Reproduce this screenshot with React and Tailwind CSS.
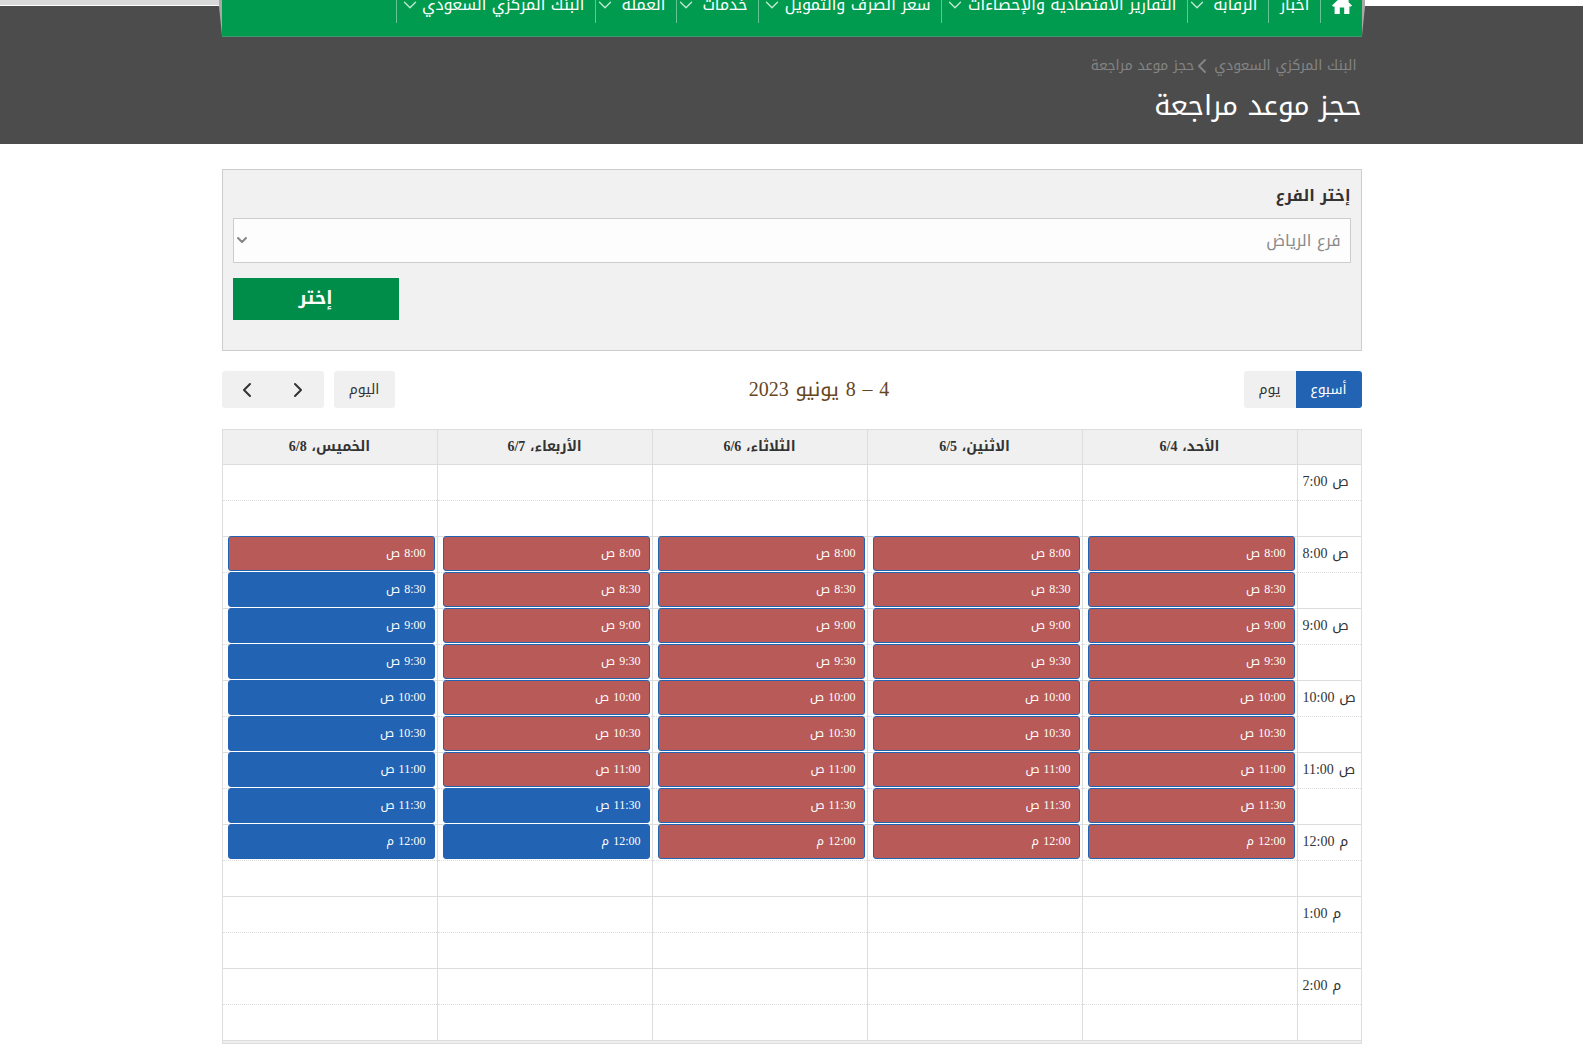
import { useState } from "react";
import { ChevronDown, ChevronLeft, ChevronRight } from "lucide-react";

const NAV = [
  { label: "أخبار", size: "w-[52px]" },
  { label: "الرقابة", size: "w-[81px]", menu: true },
  { label: "التقارير الاقتصادية والإحصاءات", size: "w-[246px] pl-1", menu: true },
  { label: "سعر الصرف والتمويل", size: "w-[183px] pl-1", menu: true },
  { label: "خدمات", size: "w-[82px]", menu: true },
  { label: "العملة", size: "w-[81px]", menu: true },
  { label: "البنك المركزي السعودي", size: "w-[199px] pl-1", menu: true },
];

// booked = number of slots already taken, counted from 8:00
const DAYS = [
  { name: "الأحد،", date: "6/4", booked: 9 },
  { name: "الاثنين،", date: "6/5", booked: 9 },
  { name: "الثلاثاء،", date: "6/6", booked: 9 },
  { name: "الأربعاء،", date: "6/7", booked: 7 },
  { name: "الخميس،", date: "6/8", booked: 1 },
];

const HOURS = [7, 8, 9, 10, 11, 12, 1, 2];
const ROWS = HOURS.flatMap((hour) => [
  { hour, minutes: "00" },
  { hour, minutes: "30" },
]);
const FIRST_SLOT = 2;
const LAST_SLOT = 10;

const period = (hour) => (hour >= 7 && hour < 12 ? "ص" : "م");

// Digits are set in a serif face, the Arabic around them is not
function Num({ children }) {
  return <span className="font-['Liberation_Serif',serif]">{children}</span>;
}

function HomeIcon() {
  return (
    <svg viewBox="0 0 20 18" className="w-5 h-[18px] fill-white" aria-hidden="true">
      <path d="M10 0 0 9.6 1 10.6H2.6V18H7.8V11.4H12.2V18H17.4V10.6H19L20 9.6 16.6 6.3V1.6H14.2V4Z" />
    </svg>
  );
}

function Nav() {
  return (
    <nav className="relative -mt-7 h-[59px] bg-[#009b4e] border-b border-[#3f9a6c]">
      <svg viewBox="0 0 3 37" className="absolute bottom-0 -left-[3px] w-[3px] h-[37px]" aria-hidden="true">
        <path d="M0 0H3V37L0 7Z" fill="#a9a9a9" />
      </svg>
      <svg viewBox="0 0 3 37" className="absolute bottom-0 -right-[3px] w-[3px] h-[37px]" aria-hidden="true">
        <path d="M3 0H0V37L3 7Z" fill="#a9a9a9" />
      </svg>
      <ul className="flex h-[45px] text-white">
        <li className="w-[42px] flex items-center justify-center pt-2 pr-0 pl-[2px] border-l border-[#66c395]">
          <a href="#" aria-label="الرئيسية">
            <HomeIcon />
          </a>
        </li>
        {NAV.map((item) => (
          <li key={item.label} className={`${item.size} border-l border-[#66c395]`}>
            <a href="#" className="flex items-center justify-between h-full pt-2 pr-[10px] text-base whitespace-nowrap">
              {item.label}
              {item.menu && <ChevronDown size={22} strokeWidth={1.5} className="-ml-[2px] shrink-0 text-[#c0e8d2]" />}
            </a>
          </li>
        ))}
      </ul>
    </nav>
  );
}

function Header() {
  return (
    <header>
      <div className="flex h-1.5">
        <div className="flex-1 bg-white" />
        <div className="flex-1 bg-[#d9d9d9] border-b border-white" />
      </div>
      <div className="flow-root h-[138px] bg-[#4c4c4c]">
        <div className="max-w-[1140px] mx-auto">
          <Nav />
          <div className="flex items-center mt-[17px] pr-[5px] h-6 text-sm text-[#848484]">
            <a href="#">البنك المركزي السعودي</a>
            <ChevronLeft size={24} className="-ml-1" />
            <span>حجز موعد مراجعة</span>
          </div>
          <h1 className="mt-2 text-[28px] leading-10 text-white">حجز موعد مراجعة</h1>
        </div>
      </div>
    </header>
  );
}

function BranchForm() {
  const [branch, setBranch] = useState("riyadh");

  return (
    <form
      onSubmit={(e) => e.preventDefault()}
      className="h-[182px] px-[10px] pt-3 bg-[#f1f1f1] border border-[#ccc]"
    >
      <label htmlFor="branch" className="block h-9 leading-7 text-base font-bold text-[#333]">
        إختر الفرع
      </label>
      <div className="relative">
        <select
          id="branch"
          value={branch}
          onChange={(e) => setBranch(e.target.value)}
          className="appearance-none block w-full h-[45px] px-[9px] bg-[#fdfdfd] border border-[#ccc] text-base text-[#8a8a8a]"
        >
          <option value="riyadh">فرع الرياض</option>
        </select>
        <ChevronDown size={16} strokeWidth={3} className="absolute left-px top-[14px] text-[#858585] pointer-events-none" />
      </div>
      <button type="submit" className="block w-[166px] h-[42px] mt-[15px] mr-auto pb-0.5 bg-[#008c49] text-lg font-bold text-white">
        إختر
      </button>
    </form>
  );
}

function Toolbar() {
  return (
    <div className="flex items-center justify-between h-[37px] mt-5 text-sm text-[#333]">
      <div className="flex h-full rounded-[3px] overflow-hidden">
        <button className="w-[66px] bg-[#2263b3] text-white">أسبوع</button>
        <button className="w-[52px] bg-[#f0f0f0]">يوم</button>
      </div>
      <h2 className="pb-0.5 text-xl text-[#65461c]">
        <Num>4</Num> <Num>–</Num> <Num>8</Num> يونيو <Num>2023</Num>
      </h2>
      <div className="flex h-full gap-[10px]">
        <button className="w-[61px] rounded-[3px] bg-[#f0f0f0]">اليوم</button>
        <div className="flex rounded-[3px] overflow-hidden bg-[#f0f0f0]">
          <button aria-label="السابق" className="w-[51px] flex items-center justify-center">
            <ChevronRight size={24} />
          </button>
          <button aria-label="التالي" className="w-[51px] flex items-center justify-center">
            <ChevronLeft size={24} />
          </button>
        </div>
      </div>
    </div>
  );
}

function Slot({ hour, minutes, booked }) {
  return (
    <button
      className={`relative block w-full h-[35px] -mt-px px-2 pb-0.5 rounded-[3px] border border-[#2263b3] text-right text-xs text-white
        ${booked ? "bg-[#b85a58]" : "bg-[#2263b3]"}`}
    >
      <Num>{`${hour}:${minutes}`}</Num> {period(hour)}
    </button>
  );
}

function Calendar() {
  return (
    <table className="w-full mt-[21px] table-fixed border-collapse border border-[#ddd] text-sm text-[#333]">
      <thead>
        <tr className="h-[35px] bg-[#f0f0f0]">
          <th className="w-16 border border-[#ddd]" />
          {DAYS.map((day) => (
            <th key={day.date} className="p-0 border border-[#ddd] font-bold">
              {day.name} <Num>{day.date}</Num>
            </th>
          ))}
        </tr>
      </thead>
      <tbody>
        {ROWS.map(({ hour, minutes }, i) => {
          // the half-hour line inside each hour is dotted
          const line = i % 2 ? "[border-top-style:dotted]" : "[border-bottom-style:dotted]";
          return (
            <tr key={i} className="h-9">
              <td dir="ltr" className={`p-0 pl-[5px] pb-0.5 border border-[#ddd] text-left whitespace-nowrap ${line}`}>
                {minutes === "00" && (
                  <>
                    <Num>{`${hour}:00`}</Num> {period(hour)}
                  </>
                )}
              </td>
              {DAYS.map((day) => (
                <td key={day.date} className={`p-0 pr-[2px] pl-[5px] align-top border border-[#ddd] ${line}`}>
                  {i >= FIRST_SLOT && i <= LAST_SLOT && (
                    <Slot hour={hour} minutes={minutes} booked={i - FIRST_SLOT < day.booked} />
                  )}
                </td>
              ))}
            </tr>
          );
        })}
      </tbody>
      <tfoot>
        <tr className="h-[3px] bg-[#eee]">
          <td colSpan={6} className="p-0 border border-[#ddd]" />
        </tr>
      </tfoot>
    </table>
  );
}

export default function App() {
  return (
    <div
      dir="rtl"
      className="overflow-hidden bg-white font-['Noto_Kufi_Arabic','Noto_Sans_Arabic','DejaVu_Sans_Condensed','DejaVu_Sans',sans-serif]"
    >
      <Header />
      <main className="max-w-[1140px] mx-auto mt-[25px]">
        <BranchForm />
        <Toolbar />
        <Calendar />
      </main>
    </div>
  );
}
